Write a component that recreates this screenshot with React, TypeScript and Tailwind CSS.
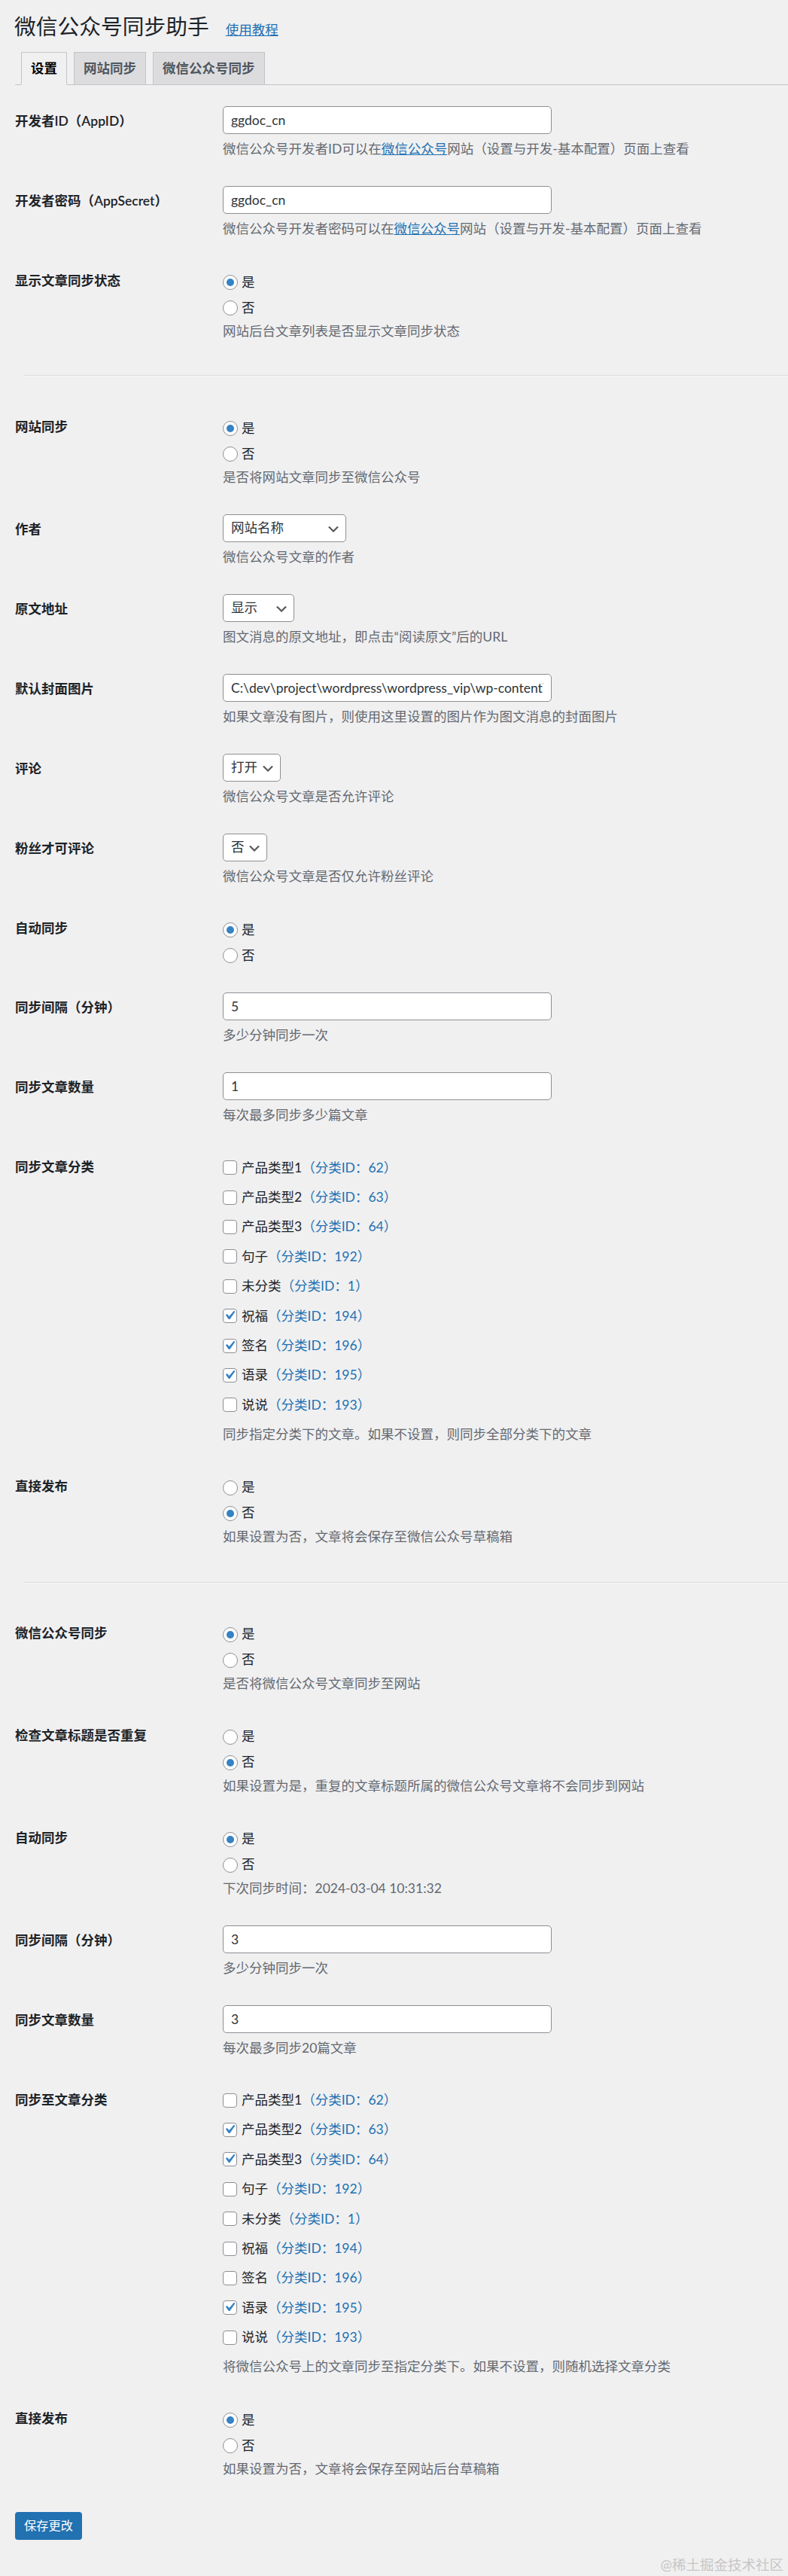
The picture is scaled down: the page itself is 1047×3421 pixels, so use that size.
import React from 'react';

type Cat = { name: string; id: number; checked?: boolean };

const cats = (checked: number[]): Cat[] =>
  [
    { name: '产品类型1', id: 62 },
    { name: '产品类型2', id: 63 },
    { name: '产品类型3', id: 64 },
    { name: '句子', id: 192 },
    { name: '未分类', id: 1 },
    { name: '祝福', id: 194 },
    { name: '签名', id: 196 },
    { name: '语录', id: 195 },
    { name: '说说', id: 193 },
  ].map(c => ({ ...c, checked: checked.includes(c.id) }));

const Row: React.FC<{ label: string; children: React.ReactNode }> = ({ label, children }) => (
  <div className="flex">
    <div className="w-[276px] shrink-0 pt-[25px] text-[17.5px] leading-[23px] font-semibold text-[#1d2327]">{label}</div>
    <div className="flex-1">{children}</div>
  </div>
);

const Desc: React.FC<{ children: React.ReactNode; className?: string }> = ({ children, className = '' }) => (
  <p className={`text-[17.5px] leading-[24px] text-[#646970] whitespace-nowrap ${className}`}>{children}</p>
);

const TextRow: React.FC<{ label: string; value: string; desc: React.ReactNode }> = ({ label, value, desc }) => (
  <Row label={label}>
    <div className="pt-[17px] pb-[20px]">
      <input
        readOnly
        value={value}
        className="block h-[37px] w-[437px] rounded-[5px] border border-[#8c8f94] bg-white px-[10px] text-[17.5px] text-[#2c3338] outline-none"
      />
      <Desc className="mt-[8px]">{desc}</Desc>
    </div>
  </Row>
);

const Chevron = () => (
  <svg viewBox="0 0 20 20" className="absolute right-[6px] top-[9px] h-[20px] w-[20px]">
    <path d="M5 6l5 5 5-5 2 1-7 7-7-7 2-1z" fill="#555" />
  </svg>
);

const SelectRow: React.FC<{ label: string; value: string; width: string; desc: string }> = ({ label, value, width, desc }) => (
  <Row label={label}>
    <div className="pt-[17px] pb-[20px]">
      <div className={`relative flex h-[37px] items-center rounded-[5px] border border-[#8c8f94] bg-white pl-[10px] text-[17.5px] text-[#2c3338] ${width}`}>
        {value}
        <Chevron />
      </div>
      <Desc className="mt-[8px]">{desc}</Desc>
    </div>
  </Row>
);

const Radio: React.FC<{ checked: boolean; text: string }> = ({ checked, text }) => (
  <div className="flex h-[34px] items-center gap-[5px] text-[17.5px] text-[#1d2327]">
    <span className="flex h-[20px] w-[20px] items-center justify-center rounded-full border border-[#8c8f94] bg-white">
      {checked && <span className="h-[10px] w-[10px] rounded-full bg-[#3582c4]" />}
    </span>
    {text}
  </div>
);

const RadioRow: React.FC<{ label: string; yes: boolean; desc?: string }> = ({ label, yes, desc }) => (
  <Row label={label}>
    <div className={`pt-[22px] ${desc ? 'pb-[20px]' : 'pb-[15px]'}`}>
      <Radio checked={yes} text="是" />
      <Radio checked={!yes} text="否" />
      {desc && <Desc className="mt-[2px]">{desc}</Desc>}
    </div>
  </Row>
);

const Checkbox: React.FC<{ cat: Cat }> = ({ cat }) => (
  <div className="flex h-[39.4px] items-center gap-[6px] text-[17.5px] text-[#1d2327]">
    <span className="relative h-[19px] w-[19px] shrink-0 rounded-[4px] border border-[#8c8f94] bg-white">
      {cat.checked && (
        <svg viewBox="0 0 20 20" className="absolute left-[-4px] top-[-4px] h-[24px] w-[24px]">
          <path d="M14.83 4.89l1.34.94-5.81 8.38H9.02L5.78 9.67l1.34-1.25 2.57 2.4z" fill="#3582c4" />
        </svg>
      )}
    </span>
    <span>
      {cat.name}
      <span className="text-[#2271b1]">（分类ID：{cat.id}）</span>
    </span>
  </div>
);

const CheckRow: React.FC<{ label: string; items: Cat[]; desc: string }> = ({ label, items, desc }) => (
  <Row label={label}>
    <div className="pt-[18px] pb-[20px]">
      {items.map(c => (
        <Checkbox key={c.id} cat={c} />
      ))}
      <Desc className="mt-[7px]">{desc}</Desc>
    </div>
  </Row>
);

const Link: React.FC<{ children: React.ReactNode }> = ({ children }) => (
  <a className="text-[#2271b1] underline">{children}</a>
);

const Separator = () => <div className="ml-[32px] border-t border-b border-t-[#dcdcde] border-b-[#f6f7f7]" />;

export default function App() {
  return (
    <div className="relative min-h-[3421px] bg-[#f0f0f1] font-['Lato','Noto_Sans_CJK_SC',sans-serif] text-[#1d2327]">
      <div className="flex items-baseline pl-[19px] pt-[17px]">
        <h1 className="text-[28.75px] leading-[37px] font-normal">微信公众号同步助手</h1>
        <a className="ml-[22px] text-[17.5px] text-[#2271b1] underline">使用教程</a>
      </div>

      <div className="ml-[20px] mt-[15px] flex border-b border-[#c3c4c7] pl-[8px]">
        {['设置', '网站同步', '微信公众号同步'].map((t, i) => (
          <div
            key={t}
            className={`-mb-px mr-[9px] h-[44px] border border-[#c3c4c7] px-[12px] text-[17.5px] leading-[42px] font-semibold ${
              i === 0 ? 'border-b-[#f0f0f1] bg-[#f0f0f1] text-black' : 'bg-[#dcdcde] text-[#50575e]'
            }`}
          >
            {t}
          </div>
        ))}
      </div>

      <div className="pl-[20px]">
        <div className="mt-[11px]">
          <TextRow
            label="开发者ID（AppID）"
            value="ggdoc_cn"
            desc={<>微信公众号开发者ID可以在<Link>微信公众号</Link>网站（设置与开发-基本配置）页面上查看</>}
          />
          <TextRow
            label="开发者密码（AppSecret）"
            value="ggdoc_cn"
            desc={<>微信公众号开发者密码可以在<Link>微信公众号</Link>网站（设置与开发-基本配置）页面上查看</>}
          />
          <RadioRow label="显示文章同步状态" yes desc="网站后台文章列表是否显示文章同步状态" />
        </div>
      </div>

      <div className="mt-[26px]">
        <Separator />
      </div>

      <div className="mt-[30px] pl-[20px]">
        <RadioRow label="网站同步" yes desc="是否将网站文章同步至微信公众号" />
        <SelectRow label="作者" value="网站名称" width="w-[164px]" desc="微信公众号文章的作者" />
        <SelectRow label="原文地址" value="显示" width="w-[95px]" desc="图文消息的原文地址，即点击“阅读原文”后的URL" />
        <TextRow
          label="默认封面图片"
          value={'C:\\dev\\project\\wordpress\\wordpress_vip\\wp-content\\'}
          desc="如果文章没有图片，则使用这里设置的图片作为图文消息的封面图片"
        />
        <SelectRow label="评论" value="打开" width="w-[77px]" desc="微信公众号文章是否允许评论" />
        <SelectRow label="粉丝才可评论" value="否" width="w-[59px]" desc="微信公众号文章是否仅允许粉丝评论" />
        <RadioRow label="自动同步" yes />
        <TextRow label="同步间隔（分钟）" value="5" desc="多少分钟同步一次" />
        <TextRow label="同步文章数量" value="1" desc="每次最多同步多少篇文章" />
        <CheckRow label="同步文章分类" items={cats([194, 196, 195])} desc="同步指定分类下的文章。如果不设置，则同步全部分类下的文章" />
        <RadioRow label="直接发布" yes={false} desc="如果设置为否，文章将会保存至微信公众号草稿箱" />
      </div>

      <div className="mt-[28px]">
        <Separator />
      </div>

      <div className="mt-[29px] pl-[20px]">
        <RadioRow label="微信公众号同步" yes desc="是否将微信公众号文章同步至网站" />
        <RadioRow label="检查文章标题是否重复" yes={false} desc="如果设置为是，重复的文章标题所属的微信公众号文章将不会同步到网站" />
        <RadioRow label="自动同步" yes desc="下次同步时间：2024-03-04 10:31:32" />
        <TextRow label="同步间隔（分钟）" value="3" desc="多少分钟同步一次" />
        <TextRow label="同步文章数量" value="3" desc="每次最多同步20篇文章" />
        <CheckRow label="同步至文章分类" items={cats([63, 64, 195])} desc="将微信公众号上的文章同步至指定分类下。如果不设置，则随机选择文章分类" />
        <RadioRow label="直接发布" yes desc="如果设置为否，文章将会保存至网站后台草稿箱" />

        <button className="mt-[25px] h-[37px] rounded-[4px] bg-[#2271b1] px-[12px] text-[16.25px] text-white">保存更改</button>
      </div>

      <div className="absolute right-[6px] top-[3393px] text-[18.5px] text-[#c6c6c6]">@稀土掘金技术社区</div>
    </div>
  );
}
